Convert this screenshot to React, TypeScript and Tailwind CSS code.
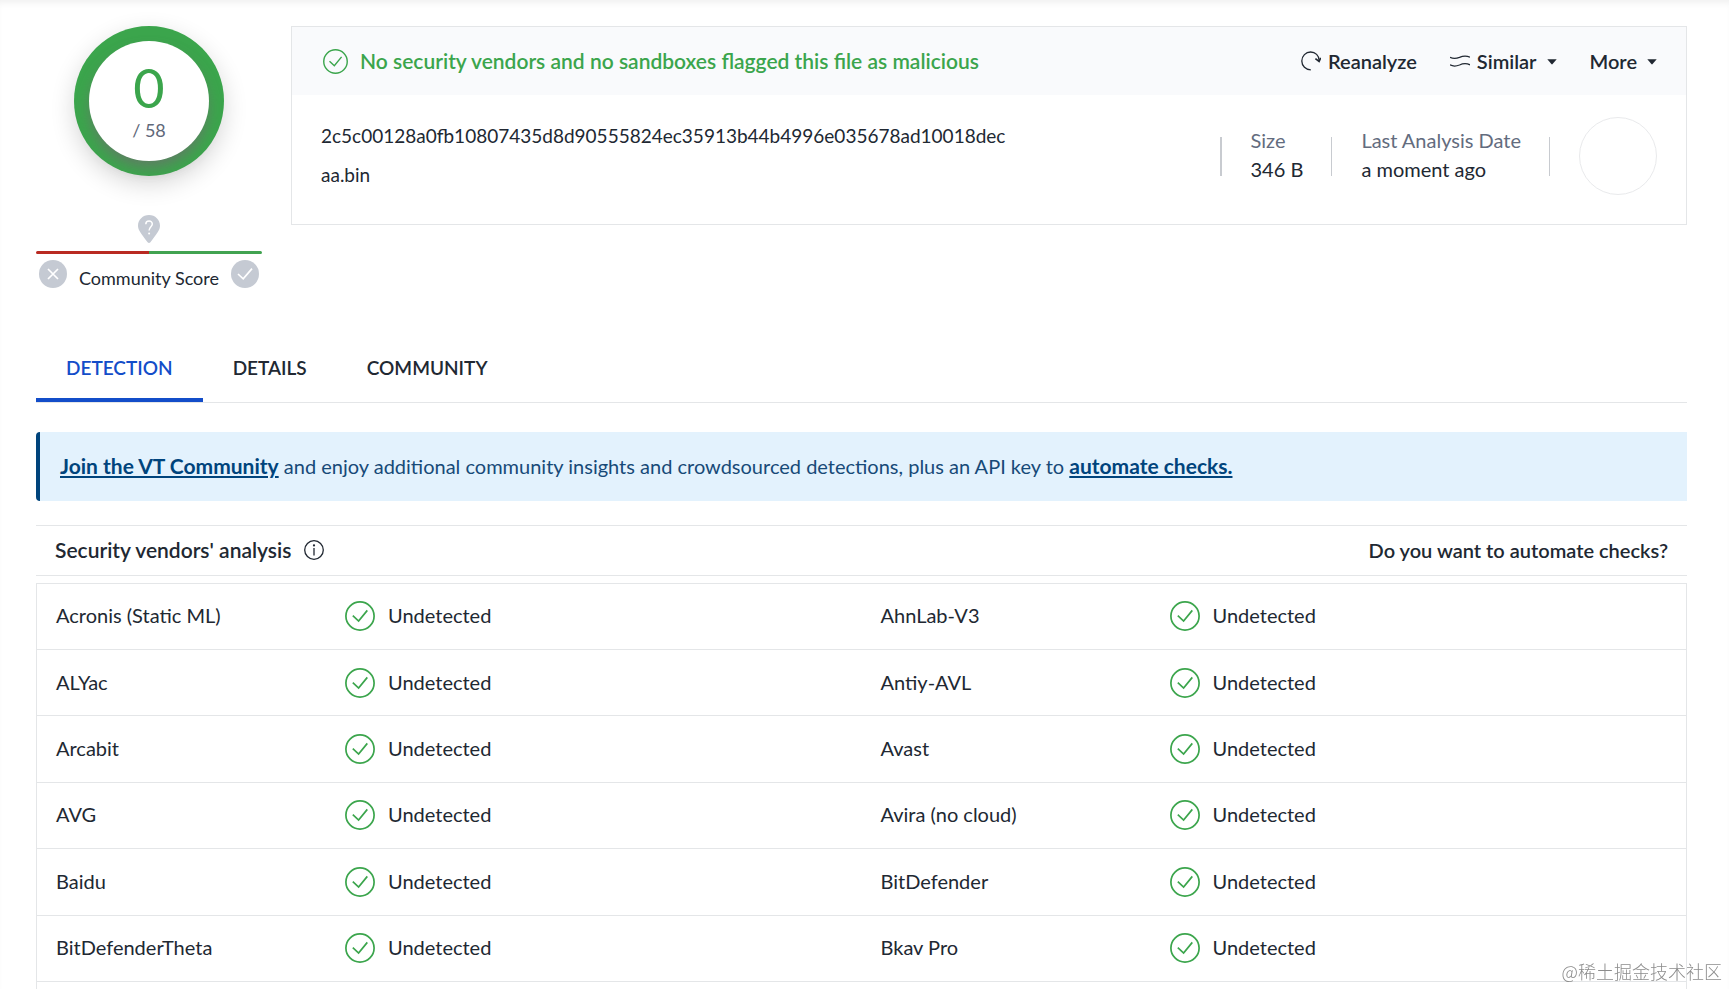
interface Row {
  left: string
  right: string
}

const ROWS: Row[] = [
  { left: 'Acronis (Static ML)', right: 'AhnLab-V3' },
  { left: 'ALYac', right: 'Antiy-AVL' },
  { left: 'Arcabit', right: 'Avast' },
  { left: 'AVG', right: 'Avira (no cloud)' },
  { left: 'Baidu', right: 'BitDefender' },
  { left: 'BitDefenderTheta', right: 'Bkav Pro' },
]

function CheckCircle({ className }: { className: string }) {
  return (
    <svg viewBox="0 0 30 30" fill="none" stroke="currentColor" className={className} aria-hidden="true">
      <circle cx="15" cy="15" r="14.1" strokeWidth="1.7" />
      <path d="M7.8 14.6 L13.6 20 L22.3 9.4" strokeWidth="1.7" />
    </svg>
  )
}

function Caret() {
  return (
    <svg viewBox="0 0 10 6" className="w-[10px] h-[6px] ml-[10px] mt-[2px]" fill="currentColor" aria-hidden="true">
      <path d="M0.3 0.3 H9.7 L5.6 5.1 Q5 5.7 4.4 5.1 Z" />
    </svg>
  )
}

function ScoreGauge() {
  return (
    <div className="size-[150px] rounded-full bg-[#3ba54c] p-[15px] shadow-[0_8px_24px_rgba(0,0,0,0.16)]">
      <div className="size-full rounded-full bg-white shadow-[0_8px_14px_-2px_rgba(110,110,110,0.75)] flex flex-col items-center">
        <div className="mt-[18px] text-[54px] leading-[58px] text-[#3ba54c]">0</div>
        <div className="text-[18px] leading-[26px] text-[#5f6879]">/ 58</div>
      </div>
    </div>
  )
}

function CommunityScore() {
  return (
    <div className="w-full mt-[39px] flex flex-col items-center">
      <svg viewBox="0 0 22 28" className="w-[22px] h-[28px]" aria-hidden="true">
        <path d="M11 0 C4.8 0 0 4.8 0 10.8 C0 15 3 18.6 9.6 27.2 Q11 28.8 12.4 27.2 C19 18.6 22 15 22 10.8 C22 4.8 17.2 0 11 0 Z" fill="#c5cad3" />
        <path d="M7.8 9.2 C7.8 5 14.3 5 14.3 9.1 C14.3 11.8 11.1 11.9 11.1 15.6" fill="none" stroke="#fff" strokeWidth="1.5" />
        <circle cx="11.1" cy="18.4" r="1" fill="#fff" />
      </svg>
      <div className="w-full h-[3px] mt-[8px] flex rounded-full overflow-hidden">
        <div className="flex-1 bg-[#b92a22]" />
        <div className="flex-1 bg-[#41a351]" />
      </div>
      <div className="w-full mt-[6px] px-[3px] flex items-start justify-between">
        <svg viewBox="0 0 28 28" className="size-[28px]" fill="none" aria-hidden="true">
          <circle cx="14" cy="14" r="14" fill="#c5cad3" />
          <path d="M9 9 L19 19 M19 9 L9 19" stroke="#fff" strokeWidth="1.7" />
        </svg>
        <span className="pt-[6px] text-[18px] leading-[24px]">Community Score</span>
        <svg viewBox="0 0 28 28" className="size-[28px]" fill="none" aria-hidden="true">
          <circle cx="14" cy="14" r="14" fill="#c5cad3" />
          <path d="M7 14 L12.2 18.8 L21 8.6" stroke="#fff" strokeWidth="1.7" />
        </svg>
      </div>
    </div>
  )
}

function FileCard() {
  return (
    <section className="flex-1 self-start border border-[#e4e6e8]">
      <div className="h-[68px] px-[29px] bg-[#f9fafc] flex items-center justify-between">
        <div className="flex items-center text-[#3ba54c]">
          <CheckCircle className="size-[25px] mr-[12px] ml-[2px]" />
          <h1 className="text-[21px] leading-[28px] font-semibold">
            No security vendors and no sandboxes flagged this file as malicious
          </h1>
        </div>
        <div className="flex items-center gap-[33px] text-[20px] leading-[28px] font-semibold">
          <button type="button" className="flex items-center">
            <svg viewBox="0 0 20 20" className="size-[20px] mr-[7px]" fill="none" stroke="currentColor" strokeWidth="1.3" aria-hidden="true">
              <path d="M9.8 18.9 C4.8 18.7 0.8 15 0.8 10 C0.8 5 4.8 1 9.6 1 C14.4 1 18 4.6 18.2 9.4" />
              <path d="M14.4 7.6 L18.1 10.4 L19.8 6.8" strokeWidth="1.7" />
            </svg>
            Reanalyze
          </button>
          <button type="button" className="flex items-center">
            <svg viewBox="0 0 20 12" className="w-[20px] h-[12px] mr-[7px]" fill="none" stroke="currentColor" strokeWidth="1.3" aria-hidden="true">
              <path d="M0 2.2 C3 4 6 3.8 9.5 2.4 C13 0.8 16 0.4 20 2.2" />
              <path d="M0 9.8 C3 11.6 6 11.4 9.5 10 C13 8.4 16 8 20 9.8" />
            </svg>
            Similar
            <Caret />
          </button>
          <button type="button" className="flex items-center">
            More
            <Caret />
          </button>
        </div>
      </div>

      <div className="h-[129px] px-[29px] flex items-start justify-between">
        <div className="pt-[26px] text-[19px] leading-[30px]">
          <p>2c5c00128a0fb10807435d8d90555824ec35913b44b4996e035678ad10018dec</p>
          <p className="mt-[9px]">aa.bin</p>
        </div>
        <div className="pt-[22px] flex items-center text-[20px] leading-[29px]">
          <div className="h-[39px] border-l-2 border-[#c8cbd0] pr-[29px]" />
          <dl className="pb-[2px]">
            <dt className="text-[#636c7e]">Size</dt>
            <dd>346 B</dd>
          </dl>
          <div className="ml-[28px] h-[39px] border-l border-[#c8cbd0] pr-[29px]" />
          <dl className="pb-[2px]">
            <dt className="text-[#636c7e]">Last Analysis Date</dt>
            <dd>a moment ago</dd>
          </dl>
          <div className="ml-[28px] h-[39px] border-l border-[#c8cbd0] pr-[29px]" />
          <div className="size-[78px] rounded-full border border-[#e9eaec]" />
        </div>
      </div>
    </section>
  )
}

function Undetected() {
  return (
    <span className="flex items-center gap-[13px]">
      <CheckCircle className="size-[30px] text-[#3ba54c]" />
      <span className="pb-[2px]">Undetected</span>
    </span>
  )
}

export default function App() {
  return (
    <div className="h-screen overflow-hidden flex flex-col bg-white pl-[36px] pr-[42px] text-[#212832] font-['Lato',sans-serif] shadow-[inset_0_6px_6px_-3px_rgba(0,0,0,0.06)]">
      <div className="shrink-0 pt-[26px] flex">
        <div className="w-[226px] mr-[29px] flex flex-col items-center">
          <ScoreGauge />
          <CommunityScore />
        </div>
        <FileCard />
      </div>

      <nav className="shrink-0 mt-[44px] flex border-b border-[#e4e6e8] text-[19px] leading-[28px] font-semibold">
        <a href="#detection" className="h-[68px] px-[30px] pt-[20px] border-b-4 border-[#134dc9] text-[#134dc9]">DETECTION</a>
        <a href="#details" className="h-[68px] px-[30px] pt-[20px]">DETAILS</a>
        <a href="#community" className="h-[68px] px-[30px] pt-[20px]">COMMUNITY</a>
      </nav>

      <div className="shrink-0 mt-[29px] h-[69px] pl-[20px] pb-[2px] flex items-center rounded-l-[4px] border-l-4 border-[#00447c] bg-[#e3f2fd] text-[#174a78] text-[20px] leading-[28px]">
        <p>
          <a href="#join" className="text-[21px] font-bold text-[#00447c] underline underline-offset-2">Join the VT Community</a>
          {' '}and enjoy additional community insights and crowdsourced detections, plus an API key to{' '}
          <a href="#automate" className="text-[21px] font-bold text-[#00447c] underline underline-offset-2">automate checks.</a>
        </p>
      </div>

      <div className="shrink-0 mt-[24px] h-[51px] px-[19px] pb-[2px] flex items-center justify-between border-y border-[#e4e6e8]">
        <h2 className="flex items-center text-[21px] leading-[28px] font-semibold">
          Security vendors' analysis
          <svg viewBox="0 0 20 20" className="size-[20px] ml-[13px]" fill="none" stroke="currentColor" strokeWidth="1.3" aria-hidden="true">
            <circle cx="10" cy="10" r="9.3" />
            <path d="M10 8 V15.4" />
            <circle cx="10" cy="5.4" r="0.5" fill="currentColor" />
          </svg>
        </h2>
        <a href="#automate" className="text-[20px] leading-[28px] font-semibold">Do you want to automate checks?</a>
      </div>

      <div className="flex-1 mt-[7px] border-x border-t border-[#e4e6e8]">
        <table className="w-full h-[398px] table-fixed text-left text-[20px] leading-[28px]">
          <colgroup>
            <col className="w-[308px]" />
            <col />
            <col className="w-[308px]" />
            <col />
          </colgroup>
          <tbody>
            {ROWS.map((row) => (
              <tr key={row.left} className="border-b border-[#e4e6e8]">
                <td className="pl-[19px] pb-[2px]">{row.left}</td>
                <td><Undetected /></td>
                <td className="pl-[19px] pb-[2px]">{row.right}</td>
                <td><Undetected /></td>
              </tr>
            ))}
          </tbody>
        </table>
      </div>

      <div className="fixed right-[7px] bottom-[6px] text-[18px] leading-[24px] text-[#8c8c8c] font-light font-['Noto_Sans_CJK_SC',sans-serif]">
        @稀土掘金技术社区
      </div>
    </div>
  )
}
